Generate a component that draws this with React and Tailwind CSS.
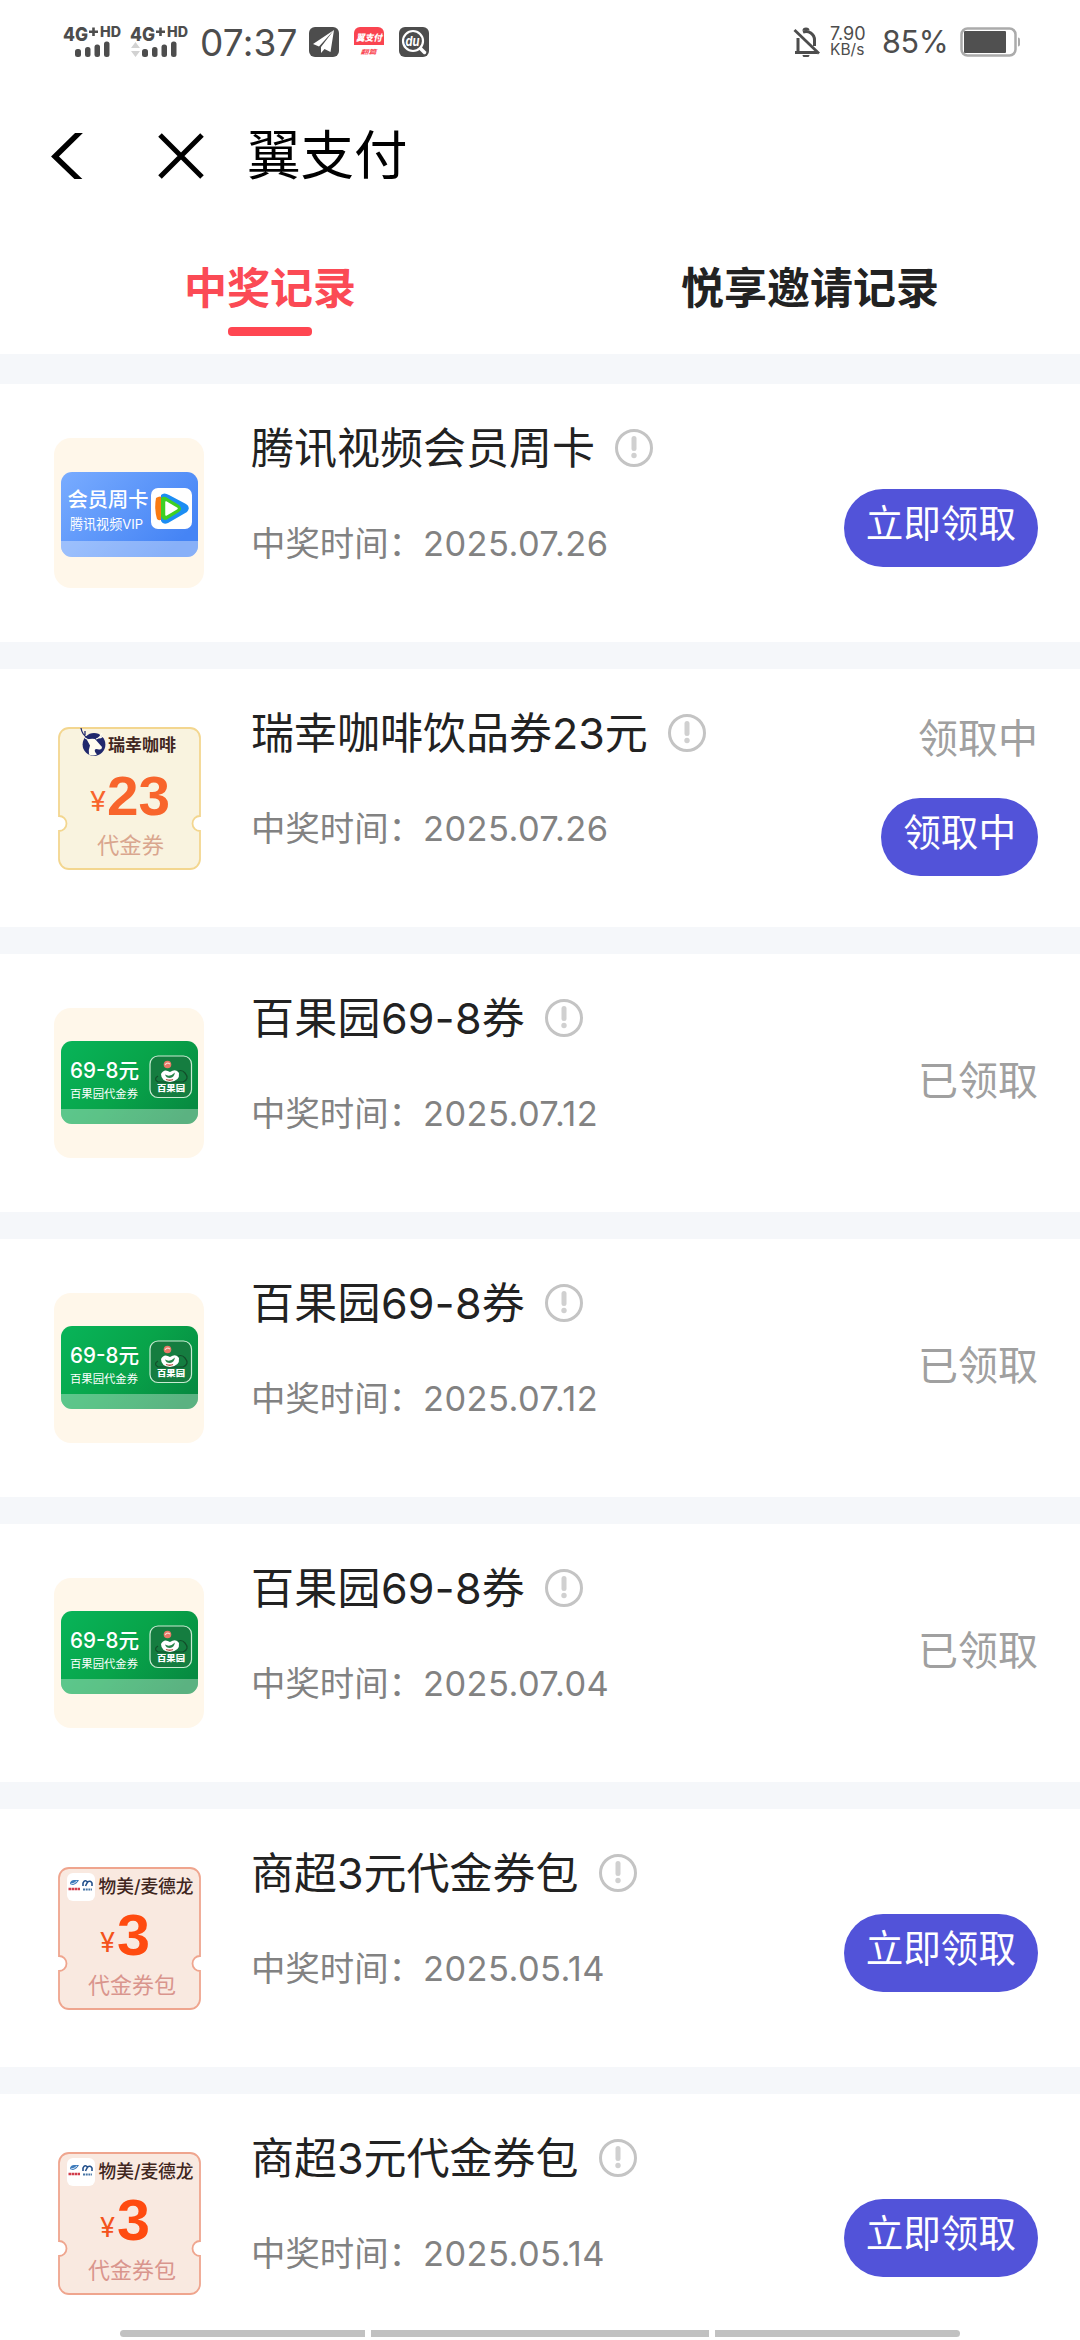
import { useState } from 'react';

const records = [
  { id: 1, title: '腾讯视频会员周卡', date: '2025.07.26', type: 'tencent', action: '立即领取' },
  { id: 2, title: '瑞幸咖啡饮品券23元', date: '2025.07.26', type: 'luckin', status: '领取中', action: '领取中' },
  { id: 3, title: '百果园69-8券', date: '2025.07.12', type: 'pagoda', status: '已领取' },
  { id: 4, title: '百果园69-8券', date: '2025.07.12', type: 'pagoda', status: '已领取' },
  { id: 5, title: '百果园69-8券', date: '2025.07.04', type: 'pagoda', status: '已领取' },
  { id: 6, title: '商超3元代金券包', date: '2025.05.14', type: 'market', action: '立即领取' },
  { id: 7, title: '商超3元代金券包', date: '2025.05.14', type: 'market', action: '立即领取' },
];

const Signal = ({ arrows }) => (
  <svg className="h-[50px] w-[62px] shrink-0" viewBox="0 -8 62 50" fill="#4d4d4d">
    <text x="0" y="15.5" fontSize="19" fontWeight="800" textLength="25" lengthAdjust="spacingAndGlyphs">4G</text>
    <path d="M26 6.700h9M30.500 2.500v8.500" stroke="#4d4d4d" strokeWidth="2.600" />
    <text x="37" y="11.5" fontSize="14" fontWeight="800" textLength="21" lengthAdjust="spacingAndGlyphs">HD</text>
    {arrows && <path d="M1 23l4.500-6 4.500 6zM1 26l4.500 6 4.500-6z" fill="#d2d2d2" />}
    <rect x="12" y="24" width="6" height="8" rx="2.500" />
    <rect x="22" y="22" width="5.500" height="10" rx="2.500" />
    <rect x="31.500" y="19.500" width="5.500" height="12.500" rx="2.500" />
    <rect x="41" y="16.500" width="5.500" height="15.500" rx="2.500" />
  </svg>
);

const StatusBar = () => (
  <div className="flex h-[84px] shrink-0 items-center pl-[63px] pr-[59px] text-[#4d4d4d]">
    <Signal />
    <div className="w-[5px]" />
    <Signal arrows />
    <span className="ml-[8px] w-[98px] text-[37px] leading-none tracking-[0.2px]">07:37</span>
    {/* notification icons */}
    <svg className="ml-[11px] h-[30px] w-[30px]" viewBox="0 0 30 30">
      <rect width="30" height="30" rx="6" fill="#4d4d4d" />
      <path d="M25 3L4 17l6 2.500zM25 3L12 20v6l3.500-4 6 3z" fill="#fff" />
    </svg>
    <svg className="ml-[14px] h-[30px] w-[32px]" viewBox="0 0 32 30">
      <path d="M7 0h18a6 6 0 016 6v12H1V6a6 6 0 016-6z" fill="#fa4450" />
      <text x="3" y="14" fontSize="9" fontWeight="900" fontStyle="italic" fill="#fff" textLength="26" lengthAdjust="spacingAndGlyphs">翼支付</text>
      <text x="7.500" y="26.500" fontSize="6" fontWeight="700" fontStyle="italic" fill="#fa4450" textLength="16" lengthAdjust="spacingAndGlyphs">翻篇</text>
    </svg>
    <svg className="ml-[14px] h-[30px] w-[30px]" viewBox="0 0 30 30">
      <rect width="30" height="30" rx="6" fill="#4d4d4d" />
      <circle cx="14" cy="14" r="10" fill="none" stroke="#fff" strokeWidth="2.200" />
      <path d="M21.500 21.500l4 4" stroke="#fff" strokeWidth="3.500" strokeLinecap="round" />
      <text x="6.500" y="18.500" fontSize="13" fontWeight="700" fontStyle="italic" fill="#fff" textLength="14" lengthAdjust="spacingAndGlyphs">du</text>
    </svg>

    <div className="ml-auto flex items-center">
      <svg className="h-[30px] w-[28px]" viewBox="0 0 28 30" fill="none" stroke="#4d4d4d">
        <path d="M2 25.500h22M5 25V11M10 5a8.500 8.500 0 0111.500 8v6" strokeWidth="3" />
        <path d="M1.500 3L26 26.500" strokeWidth="2.800" />
        <path d="M9.500 3.500a3.500 3 0 017 0zM9.500 28h7a3.500 2.500 0 01-7 0z" fill="#4d4d4d" stroke="none" />
      </svg>
      <div className="ml-[9px] w-[38px] text-[18px] leading-[16px]">
        <div>7.90</div>
        <div className="text-[15.5px]">KB/s</div>
      </div>
      <span className="ml-[14px] w-[66px] text-[30.5px] leading-none tracking-[-0.3px]">85%</span>
      <svg className="ml-[12px] h-[30px] w-[61px]" viewBox="0 0 61 30">
        <rect x="1.500" y="1.500" width="54" height="27" rx="6" fill="none" stroke="#ababab" strokeWidth="2.500" />
        <rect x="4" y="4" width="42" height="22" rx="1" fill="#505050" />
        <path d="M58 10.500q2 0 2 2v5q0 2-2 2z" fill="#ababab" />
      </svg>
    </div>
  </div>
);

const TencentThumb = () => (
  <svg className="h-[150px] w-[150px]" viewBox="0 0 150 150">
    <defs>
      <linearGradient id="blueCard" x1="0" y1="0" x2="1" y2="0.600">
        <stop offset="0" stopColor="#79acff" />
        <stop offset="1" stopColor="#4584f5" />
      </linearGradient>
    </defs>
    <rect width="150" height="150" rx="17" fill="#fff7ea" />
    <rect x="7" y="34" width="137" height="85" rx="11" fill="url(#blueCard)" />
    <path d="M7 103h137v5a11 11 0 01-11 11H18a11 11 0 01-11-11z" fill="#fff" opacity="0.36" />
    <text x="13.500" y="69" fontSize="20" fontWeight="500" fill="#fff" textLength="81" lengthAdjust="spacingAndGlyphs">会员周卡</text>
    <text x="16" y="91" fontSize="13.500" fill="#fff" textLength="73" lengthAdjust="spacingAndGlyphs">腾讯视频VIP</text>
    <rect x="97" y="50" width="41" height="41" rx="7" fill="#fff" />
    <path d="M102 60q4-3 8 0v20q-4 4-7 1-3-10-1-21z" fill="#fa7b13" />
    <path d="M107 57q3-3 8 0l17 9q5 3 1 8l-19 11q-5 2-7-2z" fill="#1c8df3" />
    <path d="M107 60q3-3 8 1l10 6q4 4 0 7l-13 8q-4 0-5-4z" fill="#3ed024" />
    <path d="M112 64v13l11-6.500z" fill="#fff" stroke="#fff" strokeWidth="1.500" strokeLinejoin="round" />
  </svg>
);

const TicketShape = ({ fill, stroke }) => (
  <path
    d="M15 5h121a10 10 0 0110 10v78a7.500 7.500 0 000 15v28a10 10 0 01-10 10H15a10 10 0 01-10-10v-28a7.500 7.500 0 000-15v-78A10 10 0 0115 5z"
    fill={fill}
    stroke={stroke}
    strokeWidth="1.800"
  />
);

const LuckinThumb = () => (
  <svg className="h-[150px] w-[150px]" viewBox="0 0 150 150">
    <TicketShape fill="#f9f3df" stroke="#f3d68f" />
    <circle cx="40" cy="21.500" r="11.400" fill="#20286c" />
    <path d="M27 5q1 7 7 10M31 8l0 4" fill="none" stroke="#20286c" strokeWidth="1.300" />
    <path d="M31 15q3 2 5 2M42 16q4-1 6-6M44 15q3 0 5-2" fill="none" stroke="#fffdf0" strokeWidth="1.200" />
    <path d="M33 17q4-2 8-1l7 8q0 3-3 2.500-3-1-4 0-1 2 2 5-4 2-8 0-1-4 1-9z" fill="#fffdf0" />
    <text x="54" y="28" fontSize="17" fontWeight="700" fill="#40261e" textLength="68" lengthAdjust="spacingAndGlyphs">瑞幸咖啡</text>
    <text x="36" y="88" fontSize="27" fill="#f8652c" textLength="16" lengthAdjust="spacingAndGlyphs">¥</text>
    <text x="53" y="92" fontSize="56" fontWeight="700" fill="#f8652c" fontFamily="Liberation Sans" textLength="63" lengthAdjust="spacingAndGlyphs">23</text>
    <text x="43" y="130" fontSize="22" fill="#d9a68e" textLength="67" lengthAdjust="spacingAndGlyphs">代金券</text>
  </svg>
);

const PagodaThumb = () => (
  <svg className="h-[150px] w-[150px]" viewBox="0 0 150 150">
    <defs>
      <linearGradient id="greenCard" x1="0" y1="0.200" x2="1" y2="0.700">
        <stop offset="0" stopColor="#08b257" />
        <stop offset="0.500" stopColor="#08a44a" />
        <stop offset="1" stopColor="#078b41" />
      </linearGradient>
    </defs>
    <rect width="150" height="150" rx="17" fill="#fff7ea" />
    <rect x="7" y="33" width="137" height="83" rx="11" fill="url(#greenCard)" />
    <path d="M7 101h137v4a11 11 0 01-11 11H18a11 11 0 01-11-11z" fill="#fff" opacity="0.340" />
    <text x="16" y="70" fontSize="21" fontWeight="500" fill="#fff" textLength="69" lengthAdjust="spacingAndGlyphs">69-8元</text>
    <text x="16" y="90" fontSize="11.500" fill="#fff" textLength="68" lengthAdjust="spacingAndGlyphs">百果园代金券</text>
    <rect x="96" y="48" width="41.500" height="41.500" rx="8" fill="#157d40" stroke="#c9ebd2" strokeWidth="1.200" />
    <path d="M104 68q-5 3 0 6h25q7-3 2-9-4-5-10 0" fill="none" stroke="#124d2a" strokeWidth="1.200" />
    <circle cx="113.500" cy="56.500" r="3.800" fill="#e87867" />
    <path d="M111 57q2-3 5-1" fill="none" stroke="#f6d9cf" strokeWidth="1.200" />
    <path d="M107 66q3-6 9-2 6-4 9 1 1 8-9 9-9-1-9-8z" fill="#fff" />
    <path d="M111 66.500q5 3 10-2-1 5-5 5.500-4 0-5-3.500z" fill="#26854a" />
    <path d="M112 71.500q4 1.500 7 0" fill="none" stroke="#b94e42" strokeWidth="1.300" />
    <text x="103" y="83" fontSize="7.500" fontWeight="900" fill="#fff" textLength="28" lengthAdjust="spacingAndGlyphs">百果园</text>
  </svg>
);

const MarketThumb = () => (
  <svg className="h-[150px] w-[150px]" viewBox="0 0 150 150">
    <TicketShape fill="#f9e9e0" stroke="#efa58e" />
    <rect x="13" y="10" width="28" height="28" rx="6" fill="#fff" />
    <path d="M16 20q1-3 4-3l5 0q-2 4-6 5-3 0-3-2z" fill="#3b7abb" />
    <path d="M17 21q3 0 6-3" fill="none" stroke="#fff" strokeWidth="0.800" />
    <path d="M14.500 26h12" stroke="#d13d4b" strokeWidth="2.600" strokeDasharray="2.500 0.500" />
    <path d="M29 23v-3q2-4 4.500-1l-2 4M33.500 19q3-2 4.500 1v3" fill="none" stroke="#23508b" strokeWidth="1.600" />
    <path d="M29 26.500h9" stroke="#4775a5" strokeWidth="2" strokeDasharray="2 0.700" />
    <text x="44.500" y="30" fontSize="18" fontWeight="500" fill="#40261e" textLength="95" lengthAdjust="spacingAndGlyphs">物美/麦德龙</text>
    <text x="46" y="89" fontSize="27" fill="#f4521b" textLength="15" lengthAdjust="spacingAndGlyphs">¥</text>
    <text x="63" y="92" fontSize="57" fontWeight="700" fill="#ff4b10" fontFamily="Liberation Sans" textLength="33" lengthAdjust="spacingAndGlyphs">3</text>
    <text x="34" y="130" fontSize="22" fill="#d9958d" textLength="88" lengthAdjust="spacingAndGlyphs">代金券包</text>
  </svg>
);

const thumbs = {
  tencent: TencentThumb,
  luckin: LuckinThumb,
  pagoda: PagodaThumb,
  market: MarketThumb,
};

const InfoIcon = () => (
  <svg className="h-[40px] w-[40px]" viewBox="0 0 40 40" fill="none">
    <circle cx="20" cy="20" r="17.500" stroke="#c4c4c4" strokeWidth="3" />
    <path d="M20 10.500v10" stroke="#d0d0d0" strokeWidth="5" strokeLinecap="round" />
    <circle cx="20" cy="27.500" r="2.700" fill="#d0d0d0" />
  </svg>
);

const RecordRow = ({ record }) => {
  const Thumb = thumbs[record.type];
  const both = record.status && record.action;

  return (
    <li className="flex h-[285px] shrink-0 items-end border-b-[27px] border-[#f5f7fa] bg-white pl-[54px] pr-[42px]">
      <div className="mb-[54px] shrink-0">
        <Thumb />
      </div>
      <div className="ml-[47px] flex h-[258px] flex-1 flex-col pt-[34px]">
        <div className="flex h-[60px] items-center">
          <h3 className={`whitespace-nowrap text-[43px] leading-[60px] text-[#222] ${record.type === 'pagoda' ? 'tracking-[0.3px]' : ''}`}>
            {record.title}
          </h3>
          <span className="ml-[19px]">
            <InfoIcon />
          </span>
        </div>
        <p className="mt-[42px] whitespace-nowrap text-[34.4px] leading-[48px] text-[#828282]">
          中奖时间：<span className="tracking-[0.45px]">{record.date}</span>
        </p>
      </div>
      <div className={both ? 'flex h-[258px] flex-col items-end pt-[40px]' : 'flex h-[258px] flex-col items-end justify-center'}>
        {record.status && (
          <span className={`text-[40px] leading-[60px] text-[#a0a0a0] ${both ? '' : 'mb-[5px]'}`}>{record.status}</span>
        )}
        {record.action && (
          <button
            type="button"
            className={`flex h-[78px] items-center rounded-full bg-[#5253d9] px-[22px] pb-[8px] text-[37.6px] text-white ${both ? 'mt-[29px]' : 'mt-[30px]'}`}
          >
            {record.action}
          </button>
        )}
      </div>
    </li>
  );
};

const App = () => {
  const [activeTab, setActiveTab] = useState('win');

  return (
    <div className="relative flex h-[2340px] w-[1080px] flex-col overflow-hidden bg-white font-['Inter','Noto_Sans_CJK_SC',sans-serif]">
      <StatusBar />

      {/* Title bar */}
      <header className="flex h-[144px] shrink-0 items-center pl-[50px] text-black">
        <svg className="h-[46px] w-[34px]" viewBox="0 0 34 46" fill="none" stroke="currentColor" strokeWidth="5.500">
          <path d="M31 -2L5 23.500l26 25" />
        </svg>
        <svg className="ml-[73px] h-[48px] w-[48px]" viewBox="0 0 48 48" fill="none" stroke="currentColor" strokeWidth="5">
          <path d="M3 3l42 42M45 3L3 45" />
        </svg>
        <h1 className="ml-[42px] text-[53.5px] leading-none">翼支付</h1>
      </header>

      {/* Tabs */}
      <nav className="flex h-[126px] shrink-0">
        <button
          type="button"
          onClick={() => setActiveTab('win')}
          className={`flex flex-1 flex-col items-center pt-[30px] text-[43px] font-bold leading-[60px] ${activeTab === 'win' ? 'text-[#fb4a55]' : 'text-[#222]'}`}
        >
          中奖记录
          {activeTab === 'win' && <span className="mt-[9px] h-[9px] w-[84px] rounded-[4px] bg-[#ff4651]" />}
        </button>
        <button
          type="button"
          onClick={() => setActiveTab('invite')}
          className={`flex flex-1 flex-col items-center pt-[30px] text-[43px] font-bold leading-[60px] ${activeTab === 'invite' ? 'text-[#fb4a55]' : 'text-[#222]'}`}
        >
          悦享邀请记录
          {activeTab === 'invite' && <span className="mt-[9px] h-[9px] w-[84px] rounded-[4px] bg-[#ff4651]" />}
        </button>
      </nav>
      <div className="h-[30px] shrink-0 bg-[#f5f7fa]" />

      <ul className="flex flex-col">
        {records.map((record) => (
          <RecordRow key={record.id} record={record} />
        ))}
      </ul>

      {/* System navigation handle */}
      <div className="absolute bottom-[3px] left-[120px] flex gap-[6px]">
        <span className="h-[7px] w-[245px] rounded-l-full bg-[#c1c1c1]" />
        <span className="h-[7px] w-[338px] bg-[#c1c1c1]" />
        <span className="h-[7px] w-[245px] rounded-r-full bg-[#c1c1c1]" />
      </div>
    </div>
  );
};

export default App;
